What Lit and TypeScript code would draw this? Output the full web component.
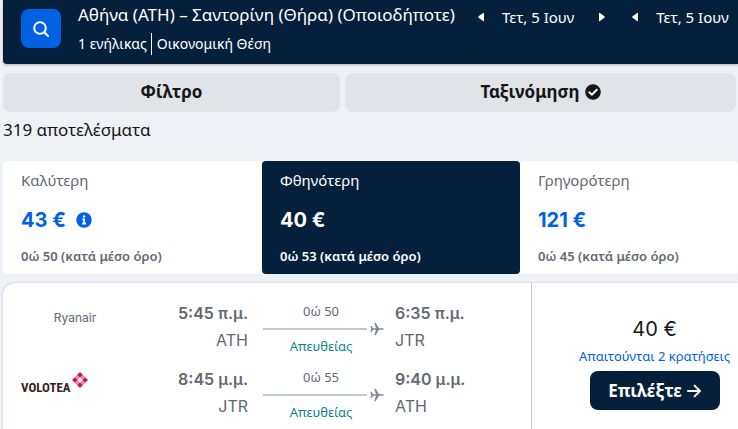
import { LitElement, html, css, svg } from "lit";
import { customElement, property } from "lit/decorators.js";
import { classMap } from "lit/directives/class-map.js";

interface Tab {
  label: string;
  price: string;
  duration: string;
  selected?: boolean;
  info?: boolean;
}

interface Leg {
  carrier: "Ryanair" | "Volotea";
  depart: string;
  from: string;
  duration: string;
  arrive: string;
  to: string;
}

const TABS: Tab[] = [
  { label: "Καλύτερη", price: "43 €", duration: "0ώ 50 (κατά μέσο όρο)", info: true },
  { label: "Φθηνότερη", price: "40 €", duration: "0ώ 53 (κατά μέσο όρο)", selected: true },
  { label: "Γρηγορότερη", price: "121 €", duration: "0ώ 45 (κατά μέσο όρο)" },
];

const LEGS: Leg[] = [
  { carrier: "Ryanair", depart: "5:45 π.μ.", from: "ATH", duration: "0ώ 50", arrive: "6:35 π.μ.", to: "JTR" },
  { carrier: "Volotea", depart: "8:45 μ.μ.", from: "JTR", duration: "0ώ 55", arrive: "9:40 μ.μ.", to: "ATH" },
];

const reset = css`
  * {
    box-sizing: border-box;
  }
  button {
    border: 0;
    padding: 0;
    margin: 0;
    background: none;
    color: inherit;
    font: inherit;
    cursor: pointer;
  }
  svg {
    display: block;
    flex: none;
  }
`;

@customElement("date-stepper")
class DateStepper extends LitElement {
  @property() date = "";

  static styles = [
    reset,
    css`
      :host {
        display: flex;
        align-items: center;
        font-size: 15px;
        line-height: 20px;
        white-space: nowrap;
      }
      .date {
        margin: 0 23px 0 16px;
      }
    `,
  ];

  render() {
    return html`
      <button aria-label="Προηγούμενη ημέρα">
        <svg width="10" height="10" viewBox="0 0 10 10" fill="currentColor">
          <path d="M8 1.2v7.6q0 .9-.9.3L2.6 5.7q-.8-.7 0-1.4L7.1.9q.9-.6.9.3z" />
        </svg>
      </button>
      <span class="date">${this.date}</span>
      <button aria-label="Επόμενη ημέρα">
        <svg width="10" height="10" viewBox="0 0 10 10" fill="currentColor">
          <path d="M2 1.2v7.6q0 .9.9.3l4.5-3.4q.8-.7 0-1.4L2.9.9Q2 .3 2 1.2z" />
        </svg>
      </button>
    `;
  }
}

@customElement("search-summary")
class SearchSummary extends LitElement {
  static styles = [
    reset,
    css`
      :host {
        display: flex;
        align-items: flex-start;
        padding: 3px 0 9px 18px;
        overflow: hidden;
        background: #05203c;
        color: #fff;
        border-radius: 0 0 0 4px;
        box-shadow: 0 1px 3px rgba(37, 32, 31, 0.3);
      }
      .search {
        display: flex;
        align-items: center;
        justify-content: center;
        flex: none;
        width: 40px;
        height: 39px;
        margin: 6px 17px 0 0;
        border-radius: 8px;
        background: #0062e3;
      }
      .route {
        margin: 0;
        font-size: 17px;
        font-weight: 400;
        line-height: 24px;
        white-space: nowrap;
      }
      .details {
        display: flex;
        align-items: center;
        margin-top: 6px;
        font-size: 14px;
        line-height: 22px;
        white-space: nowrap;
      }
      .details span + span {
        margin-left: 4px;
        padding-left: 5px;
        border-left: 1px solid #fff;
      }
      .dates {
        display: flex;
        gap: 23px;
        margin: 4px 0 0 21px;
      }
    `,
  ];

  render() {
    return html`
      <button class="search" aria-label="Αναζήτηση">
        <svg width="18" height="18" viewBox="0 0 18 18" fill="none" stroke="#fff" stroke-width="2" stroke-linecap="round">
          <circle cx="8" cy="8" r="5.8" />
          <path d="M12.2 12.2L16 16" />
        </svg>
      </button>
      <div>
        <h1 class="route">Αθήνα (ATH) – Σαντορίνη (Θήρα) (Οποιοδήποτε)</h1>
        <div class="details"><span>1 ενήλικας</span><span>Οικονομική Θέση</span></div>
      </div>
      <div class="dates">
        <date-stepper date="Τετ, 5 Ιουν"></date-stepper>
        <date-stepper date="Τετ, 5 Ιουν"></date-stepper>
      </div>
    `;
  }
}

@customElement("sort-tabs")
class SortTabs extends LitElement {
  static styles = [
    reset,
    css`
      :host {
        display: grid;
        grid-template-columns: 259fr 258fr 218fr;
      }
      .tab {
        display: block;
        padding: 8px 0 8px 18px;
        border-radius: 4px;
        background: #fff;
        color: #626971;
        text-align: left;
        white-space: nowrap;
      }
      .tab.selected {
        background: #05203c;
        color: #fff;
      }
      .label {
        display: block;
        font-size: 15px;
        line-height: 22px;
      }
      .price {
        display: flex;
        align-items: center;
        gap: 10px;
        margin: 15px 0 13px;
        color: #0062e3;
        font-family: Inter, "Noto Sans", sans-serif;
        font-size: 20px;
        font-weight: 700;
        line-height: 28px;
      }
      .selected .price {
        color: #fff;
      }
      .duration {
        display: block;
        font-size: 13px;
        font-weight: 600;
        line-height: 19px;
      }
    `,
  ];

  render() {
    return TABS.map(
      (t) => html`
        <button class=${classMap({ tab: true, selected: !!t.selected })} aria-pressed=${t.selected ? "true" : "false"}>
          <span class="label">${t.label}</span>
          <span class="price">
            ${t.price}
            ${t.info
              ? html`<svg width="16" height="16" viewBox="0 0 16 16">
                  <circle cx="8" cy="8" r="7.7" fill="#0062e3" />
                  <circle cx="8" cy="4.4" r="1.2" fill="#fff" />
                  <path d="M6.4 7.4h1.7v4.6M6.2 11.6h3.8" fill="none" stroke="#fff" stroke-width="1.6" />
                </svg>`
              : ""}
          </span>
          <span class="duration">${t.duration}</span>
        </button>
      `
    );
  }
}

const petal = (x: number, y: number, fill: string) =>
  svg`<rect x=${x - 2} y=${y - 2} width="4" height="4" rx="1" fill=${fill} transform="rotate(45 ${x} ${y})" />`;

@customElement("flight-leg")
class FlightLeg extends LitElement {
  @property({ attribute: false }) leg!: Leg;

  static styles = [
    reset,
    css`
      :host {
        display: grid;
        grid-template-columns: 108px minmax(0, 119fr) 147px minmax(0, 125fr);
        height: 66px;
        color: #626971;
        white-space: nowrap;
      }
      .carrier {
        padding-top: 8px;
        font-family: Inter, sans-serif;
        font-size: 12px;
        line-height: 20px;
        text-align: center;
      }
      .logo {
        display: flex;
        align-items: flex-start;
        gap: 1px;
        padding-top: 6px;
      }
      .logo b {
        padding-top: 8px;
        color: #3b2023;
        font-family: "Liberation Sans Narrow", "Roboto Condensed", "Open Sans Condensed", Roboto, sans-serif;
        font-size: 13px;
        line-height: 16px;
      }
      .stop {
        font-family: Inter, "Noto Sans", sans-serif;
        font-size: 16px;
      }
      .depart {
        text-align: right;
      }
      .time {
        font-weight: 600;
        line-height: 26px;
      }
      .code {
        line-height: 28px;
      }
      .path {
        margin: 0 11px 0 15px;
      }
      .duration,
      .direct {
        width: 116px;
        font-size: 13px;
        line-height: 23px;
        text-align: center;
      }
      .direct {
        color: #0c838a;
      }
      .track {
        display: flex;
        align-items: center;
        gap: 3px;
        height: 12px;
      }
      .line {
        flex: 1;
        height: 2px;
        background: #c1c7cf;
      }
    `,
  ];

  render() {
    const l = this.leg;
    return html`
      ${l.carrier === "Ryanair"
        ? html`<div class="carrier">Ryanair</div>`
        : html`<div class="logo">
            <b>VOLOTEA</b>
            <svg width="16" height="16" viewBox="0 0 16 16">
              ${petal(5.3, 5.3, "#f08aa4")} ${petal(10.7, 5.3, "#f08aa4")} ${petal(5.3, 10.7, "#f08aa4")}
              ${petal(10.7, 10.7, "#f08aa4")} ${petal(8, 2.8, "#c8174b")} ${petal(13.2, 8, "#c8174b")}
              ${petal(8, 13.2, "#c8174b")} ${petal(2.8, 8, "#c8174b")}
            </svg>
          </div>`}
      <div class="stop depart">
        <div class="time">${l.depart}</div>
        <div class="code">${l.from}</div>
      </div>
      <div class="path">
        <div class="duration">${l.duration}</div>
        <div class="track">
          <div class="line"></div>
          <svg width="14" height="14" viewBox="0 0 14 14" fill="#7d8793">
            <path d="M.4 3.8h1L3 6.2h3L4.3.8h1.3L9 6.2h3.6q1.2.1 1.2.8t-1.2.8H9l-3.4 5.4H4.3L6 7.8H3l-1.6 2.4h-1L1.2 7z" />
          </svg>
        </div>
        <div class="direct">Απευθείας</div>
      </div>
      <div class="stop">
        <div class="time">${l.arrive}</div>
        <div class="code">${l.to}</div>
      </div>
    `;
  }
}

@customElement("app-root")
class AppRoot extends LitElement {
  static styles = [
    reset,
    css`
      :host {
        display: flex;
        flex-direction: column;
        box-sizing: border-box;
        min-height: 100vh;
        padding-left: 3px;
        overflow: hidden;
        background: #eef1f6;
        color: #161616;
        font-family: "Noto Sans", sans-serif;
      }
      .actions {
        display: grid;
        grid-template-columns: 337fr 391fr;
        gap: 5px;
        margin: 9px 2px 0 0;
      }
      .action {
        display: flex;
        align-items: center;
        justify-content: center;
        gap: 5px;
        height: 39px;
        padding-bottom: 2px;
        border-radius: 8px;
        background: #e0e3e8;
        font-size: 17px;
        font-weight: 700;
        line-height: 24px;
      }
      .count {
        margin: 6px 0 19px;
        font-size: 17px;
        line-height: 24px;
      }
      .ticket {
        display: flex;
        flex: 1;
        margin-top: 9px;
        border-radius: 12px 0 0 0;
        background: #fff;
        box-shadow: 0 0 2px rgba(37, 32, 31, 0.3);
      }
      .legs {
        flex: 1;
        min-width: 0;
        padding: 17px 11px 0 18px;
      }
      .offer {
        display: flex;
        flex-direction: column;
        align-items: center;
        flex: none;
        padding: 32px 8px 0 47px;
        border-left: 1px solid #c1c7cf;
      }
      .total {
        font-family: Inter, "Noto Sans", sans-serif;
        font-size: 20px;
        line-height: 28px;
      }
      .bookings {
        color: #0062e3;
        font-size: 13px;
        line-height: 26px;
        white-space: nowrap;
      }
      .select {
        display: flex;
        align-items: center;
        justify-content: center;
        gap: 5px;
        width: 130px;
        height: 39px;
        margin-top: 2px;
        border-radius: 8px;
        background: #05203c;
        color: #fff;
        font-size: 17px;
        font-weight: 700;
        line-height: 24px;
      }
    `,
  ];

  render() {
    return html`
      <search-summary></search-summary>
      <div class="actions">
        <button class="action">Φίλτρο</button>
        <button class="action">
          Ταξινόμηση
          <svg width="16" height="16" viewBox="0 0 16 16">
            <circle cx="8" cy="8" r="7.8" fill="#161616" />
            <path d="M4.3 8.2l2.6 2.5 4.9-5" fill="none" stroke="#fff" stroke-width="2" stroke-linecap="round" />
          </svg>
        </button>
      </div>
      <p class="count">319 αποτελέσματα</p>
      <sort-tabs></sort-tabs>
      <section class="ticket">
        <div class="legs">${LEGS.map((l) => html`<flight-leg .leg=${l}></flight-leg>`)}</div>
        <div class="offer">
          <div class="total">40 €</div>
          <div class="bookings">Απαιτούνται 2 κρατήσεις</div>
          <button class="select">
            Επιλέξτε
            <svg width="14" height="14" viewBox="0 0 14 14" fill="none" stroke="#fff" stroke-width="2" stroke-linecap="round" stroke-linejoin="round">
              <path d="M1 7h12M7.6 1.6L13 7l-5.4 5.4" />
            </svg>
          </button>
        </div>
      </section>
    `;
  }
}
